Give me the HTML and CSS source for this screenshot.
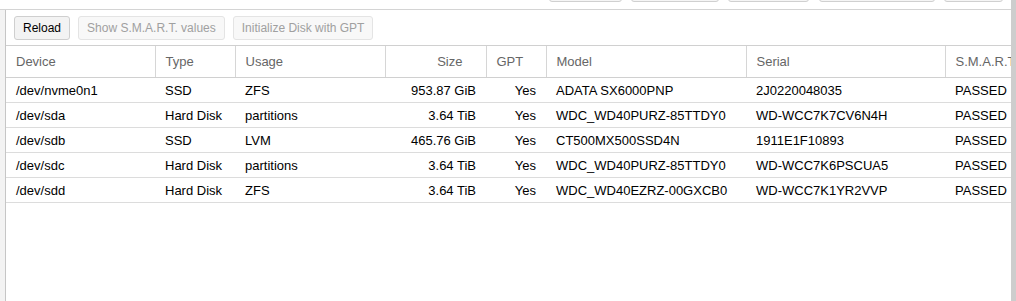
FILE: index.html
```html
<!DOCTYPE html>
<html lang="en">
<head>
  <meta charset="UTF-8">
  <title>Disks</title>
  <link rel="stylesheet" href="styles.css">
</head>
<body>
  <div class="page">
    <div class="content">
      <div class="topbar">
        <span class="top-btn b1"></span>
        <span class="top-btn b2"></span>
        <span class="top-btn b3"></span>
        <span class="top-btn b4"></span>
        <span class="top-btn b5"></span>
      </div>
      <div class="main">
        <div class="side"></div>
        <div class="panel">
          <div class="toolbar">
            <button class="btn">Reload</button>
            <button class="btn disabled">Show S.M.A.R.T. values</button>
            <button class="btn disabled">Initialize Disk with GPT</button>
          </div>
          <table class="grid">
            <colgroup>
              <col class="c-device"><col class="c-type"><col class="c-usage"><col class="c-size">
              <col class="c-gpt"><col class="c-model"><col class="c-serial"><col class="c-smart">
            </colgroup>
            <thead>
              <tr>
                <th>Device</th><th>Type</th><th>Usage</th><th class="num">Size</th>
                <th>GPT</th><th>Model</th><th>Serial</th><th>S.M.A.R.T.</th>
              </tr>
            </thead>
            <tbody>
              <tr><td>/dev/nvme0n1</td><td>SSD</td><td>ZFS</td><td class="num">953.87 GiB</td><td class="num">Yes</td><td>ADATA SX6000PNP</td><td>2J0220048035</td><td>PASSED</td></tr>
              <tr><td>/dev/sda</td><td>Hard Disk</td><td>partitions</td><td class="num">3.64 TiB</td><td class="num">Yes</td><td>WDC_WD40PURZ-85TTDY0</td><td>WD-WCC7K7CV6N4H</td><td>PASSED</td></tr>
              <tr><td>/dev/sdb</td><td>SSD</td><td>LVM</td><td class="num">465.76 GiB</td><td class="num">Yes</td><td>CT500MX500SSD4N</td><td>1911E1F10893</td><td>PASSED</td></tr>
              <tr><td>/dev/sdc</td><td>Hard Disk</td><td>partitions</td><td class="num">3.64 TiB</td><td class="num">Yes</td><td>WDC_WD40PURZ-85TTDY0</td><td>WD-WCC7K6PSCUA5</td><td>PASSED</td></tr>
              <tr><td>/dev/sdd</td><td>Hard Disk</td><td>ZFS</td><td class="num">3.64 TiB</td><td class="num">Yes</td><td>WDC_WD40EZRZ-00GXCB0</td><td>WD-WCC7K1YR2VVP</td><td>PASSED</td></tr>
            </tbody>
          </table>
        </div>
      </div>
    </div>
    <div class="scrollbar"></div>
  </div>
</body>
</html>
```

FILE: styles.css
```css
html, body {
  margin: 0;
  padding: 0;
  height: 100%;
  overflow: hidden;
}
body {
  font-family: "Liberation Sans", Arial, sans-serif;
  font-size: 13px;
  color: #000;
  background: #fff;
}
.page {
  display: flex;
  height: 100%;
}
.content {
  flex: 1;
  display: flex;
  flex-direction: column;
  min-width: 0;
}
.scrollbar {
  width: 5px;
  background: #cdcdcd;
}
.topbar {
  height: 9px;
  border-bottom: 1px solid #d4d4d4;
  display: flex;
  overflow: hidden;
  background: #fff;
}
.top-btn {
  display: block;
  height: 20px;
  margin-top: -18px;
  border: 1px solid #d0d0d0;
  border-radius: 3px;
  background: #f5f5f5;
  box-sizing: border-box;
}
.b1 { margin-left: 549px; width: 73px; }
.b2 { margin-left: 9px; width: 88px; }
.b3 { margin-left: 9px; width: 81px; }
.b4 { margin-left: 10px; width: 116px; }
.b5 { margin-left: 9px; width: 59px; }
.main {
  flex: 1;
  display: flex;
  min-height: 0;
}
.side {
  width: 5px;
  background: #f3f3f3;
  border-right: 1px solid #c6c6c6;
}
.panel {
  flex: 1;
  overflow: hidden;
  background: #fff;
}
.toolbar {
  height: 36px;
  box-sizing: border-box;
  padding: 6px 0 0 8px;
  display: flex;
  gap: 8px;
  align-items: flex-start;
  border-bottom: 1px solid #d0d0d0;
}
.btn {
  height: 24px;
  padding: 0 8px;
  font-family: inherit;
  font-size: 12px;
  color: #000;
  background: #f3f3f3;
  border: 1px solid #cfcfcf;
  border-radius: 3px;
}
.btn.disabled {
  color: #a0a0a0;
  background: #f8f8f8;
  border-color: #e4e4e4;
}
.grid {
  border-collapse: collapse;
  table-layout: fixed;
  width: 1049px;
}
.c-device { width: 149px; }
.c-type { width: 80px; }
.c-usage { width: 150px; }
.c-size { width: 101px; }
.c-gpt { width: 60px; }
.c-model { width: 200px; }
.c-serial { width: 199px; }
.c-smart { width: 110px; }
.grid th {
  height: 31px;
  padding: 0 10px;
  font-weight: normal;
  color: #666;
  text-align: left;
  border-right: 1px solid #d6d6d6;
  border-bottom: 1px solid #d0d0d0;
  white-space: nowrap;
  overflow: hidden;
}
.grid th.num {
  text-align: right;
  padding-right: 23px;
}
.grid td {
  height: 24px;
  padding: 0 10px;
  border-bottom: 1px solid #dcdcdc;
  white-space: nowrap;
  overflow: hidden;
}
.grid td.num {
  text-align: right;
}
```
